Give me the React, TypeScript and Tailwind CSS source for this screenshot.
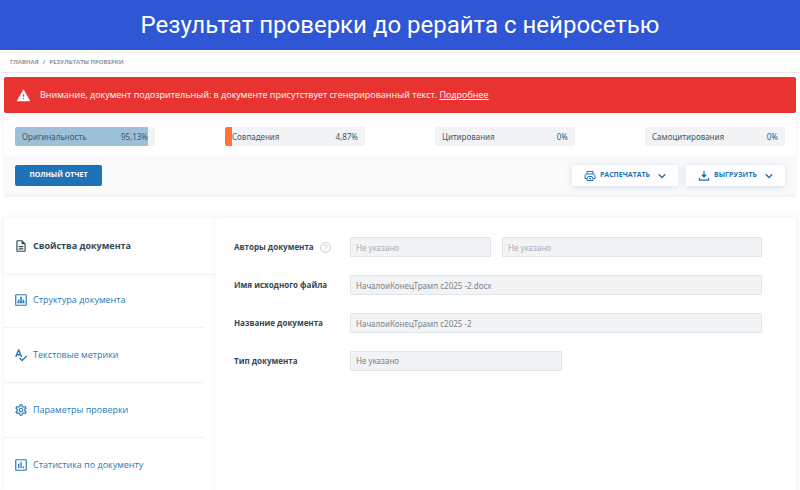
import type { ReactNode } from 'react';
import { clsx } from 'clsx';
import { MdOutlineDescription, MdOutlineSettings, MdWarning } from 'react-icons/md';

type MetricProps = {
  label: string;
  value: string;
  share: number;
  barClass?: string;
};

/**
 * Metric - One score of the check with its share filled in behind the text
 */
const Metric = ({ label, value, share, barClass }: MetricProps) => (
  <div className="relative flex h-[19px] w-[140px] items-center justify-between overflow-hidden rounded-xs bg-[#f1f3f5] px-[7px] font-['Noto_Sans',sans-serif] text-[8px] text-[#3f5767]">
    <div className={clsx('absolute inset-y-0 left-0', barClass)} style={{ width: `${share}%` }} />
    <span className="relative">{label}</span>
    <span className="relative">{value}</span>
  </div>
);

const ChevronDown = () => (
  <svg className="ml-2 h-2 w-2" viewBox="0 0 8 8" fill="none" stroke="currentColor" strokeWidth="1.300" aria-hidden="true">
    <path d="M0.700 2.200L4 5.500l3.300-3.300" />
  </svg>
);

const SquareIcon = ({ children }: { children: ReactNode }) => (
  <svg className="h-[14px] w-[14px] shrink-0" viewBox="0 0 24 24" aria-hidden="true">
    <rect x="3" y="3" width="18" height="18" rx="1" fill="none" stroke="currentColor" strokeWidth="2" />
    {children}
  </svg>
);

const navItems = [
  {
    label: 'Структура документа',
    icon: (
      <SquareIcon>
        <path
          d="M10.5 6.5h3v3.500h-.7v1.500H17V14h1v3.500h-3.500V14h1v-1h-2.700v1h1v3.500h-3.600V14h1v-1H8.500v1h1v3.500H6V14h1v-2.500h4.200V10h-.7z"
          fill="currentColor"
        />
      </SquareIcon>
    ),
  },
  {
    label: 'Текстовые метрики',
    icon: (
      <svg
        className="h-[14px] w-[14px] shrink-0"
        viewBox="0 0 24 24"
        fill="none"
        stroke="currentColor"
        strokeWidth="2.400"
        aria-hidden="true"
      >
        <path d="M3 15.500L7.800 3.500h.4L13 15.500M4.500 11.500h7" />
        <path d="M9.500 17l4.500 4.500 8-8" />
      </svg>
    ),
  },
  {
    label: 'Параметры проверки',
    icon: <MdOutlineSettings className="h-[14px] w-[14px] shrink-0" />,
  },
  {
    label: 'Статистика по документу',
    icon: (
      <SquareIcon>
        <path d="M8 10v7.500M12 6.500v11M16 14.500v3" stroke="currentColor" strokeWidth="2.200" />
      </SquareIcon>
    ),
  },
];

const fieldClass =
  "h-5 min-w-0 rounded-[1px] border border-[#e1e5e9] bg-[#f1f3f5] px-[5px] font-['Noto_Sans',sans-serif] text-[8px] text-[#7a8489] placeholder:text-[#a9b0b4]";
const labelClass = 'w-[116px] shrink-0 text-[8px] font-bold text-[#2f4858]';
const actionClass =
  'flex h-[21px] items-center justify-center rounded-[1px] bg-white text-[#1e72b8] shadow-[0_1px_6px_rgba(30,114,184,0.2)]';

export default function App() {
  return (
    <div className="flex h-screen flex-col overflow-hidden bg-white font-['Open_Sans','Noto_Sans',sans-serif]">
      <h1 className="flex h-[50px] shrink-0 items-center justify-center bg-[#2f56d4] font-[Roboto,sans-serif] text-2xl text-white">
        Результат проверки до рерайта с нейросетью
      </h1>

      {/* Breadcrumbs */}
      <nav
        aria-label="Навигация"
        className="mt-0.5 flex h-[21px] shrink-0 items-center gap-1 border-y border-[#ececec] px-[10px] text-[6px] font-bold text-[#8d9599]"
      >
        <a href="#home">ГЛАВНАЯ</a>
        <span>/</span>
        <span>РЕЗУЛЬТАТЫ ПРОВЕРКИ</span>
      </nav>

      <div
        role="alert"
        className="mx-1 mt-1 flex h-9 shrink-0 items-center gap-[9px] rounded-xs bg-[#e93330] px-3 text-[9px] text-white"
      >
        <MdWarning className="h-[15px] w-[15px]" />
        <p>
          Внимание, документ подозрительный: в документе присутствует сгенерированный текст.{' '}
          <a href="#details" className="underline">
            Подробнее
          </a>
        </p>
      </div>

      {/* Scores and report actions */}
      <section className="mx-1 shrink-0 shadow-[0_1px_2px_rgba(0,0,0,0.1)]">
        <div className="flex h-[43px] items-center justify-between px-[11px] pt-1">
          <Metric label="Оригинальность" value="95,13%" share={95.13} barClass="bg-[#9dc0d9]" />
          <Metric label="Совпадения" value="4,87%" share={4.87} barClass="bg-[#ff743b]" />
          <Metric label="Цитирования" value="0%" share={0} />
          <Metric label="Самоцитирования" value="0%" share={0} />
        </div>
        <div className="flex h-[39px] items-center gap-2 bg-[#fafafa] px-[11px] text-[7px] font-bold">
          <button type="button" className="mr-auto h-[21px] w-[87px] rounded-xs bg-[#1e72b8] text-white">
            ПОЛНЫЙ ОТЧЕТ
          </button>
          <button type="button" className={clsx(actionClass, 'w-[106px]')}>
            <svg
              className="mr-1 h-3 w-3"
              viewBox="0 0 24 24"
              fill="none"
              stroke="currentColor"
              strokeWidth="2"
              strokeLinejoin="round"
              aria-hidden="true"
            >
              <path d="M6 8V3h12v5M6 17H2v-6a3 3 0 0 1 3-3h14a3 3 0 0 1 3 3v6h-4M6 17l2-4h8l2 4v4H6zM10 17h4" />
            </svg>
            РАСПЕЧАТАТЬ
            <ChevronDown />
          </button>
          <button type="button" className={clsx(actionClass, 'w-[99px]')}>
            <svg className="mr-1 h-3 w-3" viewBox="0 0 24 24" fill="none" stroke="currentColor" strokeWidth="2.500" aria-hidden="true">
              <path d="M12 2v10M3 16v4h18v-4" />
              <path d="M6 9h12l-6 7z" fill="currentColor" stroke="none" />
            </svg>
            ВЫГРУЗИТЬ
            <ChevronDown />
          </button>
        </div>
      </section>

      {/* Document card */}
      <main className="mx-1 mt-[23px] flex flex-1 shadow-[0_0_8px_rgba(0,0,0,0.05)]">
        <nav aria-label="Разделы" className="w-[212px] shrink-0 text-[9px]">
          <a
            href="#properties"
            aria-current="page"
            className="flex h-[55px] items-center gap-[5px] bg-white px-[10px] font-bold text-[#2f4858] shadow-[0_2px_6px_rgba(0,0,0,0.06)]"
          >
            <MdOutlineDescription className="h-[14px] w-[14px] shrink-0" />
            Свойства документа
          </a>
          {navItems.map(({ label, icon }) => (
            <a
              key={label}
              href="#section"
              className="mr-3 flex h-[55px] items-center gap-[5px] border-b border-[#f1f1f1] px-[10px] text-[#2779b9]"
            >
              {icon}
              {label}
            </a>
          ))}
        </nav>

        <form className="relative flex flex-1 flex-col gap-[18px] bg-white py-[19px] pr-[34px] pl-[18px] shadow-[0_0_8px_rgba(0,0,0,0.05)]">
          <div className="flex items-center">
            <label htmlFor="author" className={clsx(labelClass, 'flex items-center gap-1.5')}>
              Авторы документа
              <svg
                className="h-[11px] w-[11px] text-[#c5c9cb]"
                viewBox="0 0 24 24"
                fill="none"
                stroke="currentColor"
                strokeWidth="2"
                aria-hidden="true"
              >
                <circle cx="12" cy="12" r="11" />
                <path d="M8.500 9.500a3.500 3.500 0 1 1 5 3c-1.200.7-1.500 1.200-1.500 2.500M12 17v2" />
              </svg>
            </label>
            <input id="author" placeholder="Не указано" readOnly className={clsx(fieldClass, 'w-[141px]')} />
            <input aria-label="Соавторы" placeholder="Не указано" readOnly className={clsx(fieldClass, 'ml-[11px] flex-1')} />
          </div>
          <div className="flex items-center">
            <label htmlFor="file" className={labelClass}>
              Имя исходного файла
            </label>
            <input id="file" readOnly value="НачалоиКонецТрамп с2025 -2.docx" className={clsx(fieldClass, 'flex-1')} />
          </div>
          <div className="flex items-center">
            <label htmlFor="title" className={labelClass}>
              Название документа
            </label>
            <input id="title" readOnly value="НачалоиКонецТрамп с2025 -2" className={clsx(fieldClass, 'flex-1')} />
          </div>
          <div className="flex items-center">
            <label htmlFor="type" className={labelClass}>
              Тип документа
            </label>
            <select id="type" className={clsx(fieldClass, 'w-[212px] appearance-none')}>
              <option>Не указано</option>
            </select>
          </div>
        </form>
      </main>
    </div>
  );
}
